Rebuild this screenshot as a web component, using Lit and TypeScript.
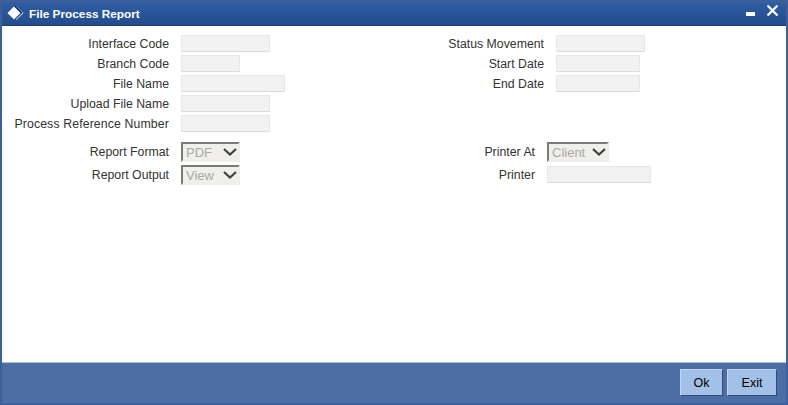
import { LitElement, html, css } from "lit";
import { customElement } from "lit/decorators.js";

const inp = (w: number) => html`<span class="input" style="width:${w}px"></span>`;
const sel = (w: number, t: string) => html`<span class="select" style="width:${w}px"><span class="val">${t}</span>
  <svg width="14" height="8" viewBox="0 0 14 8"><path d="M1 1 L7 6.5 L13 1" fill="none" stroke="#404040" stroke-width="2.2"/></svg></span>`;

@customElement("app-root")
export class AppRoot extends LitElement {
  static styles = css`
    :host { display: block; width: 788px; height: 405px; font-family: "Liberation Sans", Arial, sans-serif; overflow: hidden; }
    .win { width: 788px; height: 405px; box-sizing: border-box; background: #3a5f9b; padding: 3px 2px 2px 2px; display: flex; flex-direction: column; }
    .head { height: 23px; flex: none; display: flex; align-items: center; padding: 0 8px 0 4px; box-sizing: border-box;
      background: linear-gradient(#2f5da3 0, #234c8c 100%); border-bottom: 1px solid #1c3d75; }
    .title { color: #fff; font-size: 11.8px; font-weight: bold; margin-left: 4px; }
    .logo { flex: none; margin-top: -2px; }
    .ctrls { margin-left: auto; display: flex; align-items: flex-start; gap: 12px; height: 100%; }
    .min { width: 9px; height: 4px; background: #fff; margin-top: 9px; }
    .x { margin-top: 2px; }
    .body { flex: 1; background: #fff; padding: 9px 0 0 0; display: flex; flex-direction: column; }
    .top { display: flex; height: 100px; }
    .bottom { display: flex; margin-top: 7px; }
    .col { display: flex; flex-direction: column; }
    .row { display: flex; align-items: flex-start; height: 20px; gap: 12px; }
    .bottom .row { height: 23px; }
    .l1 { width: 167px; }
    .l3 { width: 181px; }
    .l4 { width: 172px; }
    .lbl { text-align: right; font-size: 12.3px; line-height: 18px; color: #333; white-space: nowrap; }
    .lbl.wide { letter-spacing: 0.12px; }
    .bottom .lbl { line-height: 20px; }
    .c1 { width: 361px; }
    .input { display: block; height: 17px; box-sizing: border-box; background: #f2f2f2; border: 1px solid #e8e8e4; border-bottom-color: #dcdcd8; flex: none; }
    .bottom .input { margin-top: 1px; }
    .select { display: flex; align-items: center; justify-content: space-between; height: 20px; box-sizing: border-box; background: #f0efeb;
      border: 2px solid; border-color: #7b7b76 #eeeeea #eeeeea #7b7b76; padding: 0 1px 0 3px; flex: none; color: #a8a8a8; font-size: 13px; }
    .foot { height: 41px; flex: none; background: #4d6ea5; border-top: 1px solid #a9bfe0; box-sizing: border-box; display: flex; justify-content: flex-end; align-items: flex-start; padding: 6px 9px 0 0; gap: 4px; }
    .btn { width: 43px; height: 27px; box-sizing: border-box; background: #a3c0e6; border: 1px solid; border-color: #c4d7f0 #2d4a7a #2d4a7a #c4d7f0; color: #000; font: 12.5px "Liberation Sans", Arial, sans-serif; padding: 0; display: flex; align-items: center; justify-content: center; }
    .btn.exit { width: 50px; }
  `;
  render() {
    return html`<div class="win">
      <div class="head">
        <svg class="logo" width="19" height="17" viewBox="0 0 19 17"><path d="M10.5 1 L17.5 8 L10.5 15 L3.5 8 Z" fill="#bccde6"/><path d="M9.5 0.5 L16.5 7.5 L9.5 14.5 L2.5 7.5 Z" fill="#12305f"/><path d="M8 1.5 L14.5 8 L8 14.5 L1.5 8 Z" fill="#fff"/></svg>
        <span class="title">File Process Report</span>
        <div class="ctrls">
          <span class="min"></span>
          <svg class="x" width="11" height="11" viewBox="0 0 11 11"><path d="M0.5 0.5 L10.5 10.5 M10.5 0.5 L0.5 10.5" stroke="#fff" stroke-width="2.2"/></svg>
        </div>
      </div>
      <div class="body">
        <div class="top">
          <div class="col c1">
            <div class="row"><span class="lbl l1">Interface Code</span>${inp(89)}</div>
            <div class="row"><span class="lbl l1">Branch Code</span>${inp(59)}</div>
            <div class="row"><span class="lbl l1">File Name</span>${inp(104)}</div>
            <div class="row"><span class="lbl l1">Upload File Name</span>${inp(89)}</div>
            <div class="row"><span class="lbl l1 wide">Process Reference Number</span>${inp(89)}</div>
          </div>
          <div class="col">
            <div class="row"><span class="lbl l3">Status Movement</span>${inp(89)}</div>
            <div class="row"><span class="lbl l3">Start Date</span>${inp(84)}</div>
            <div class="row"><span class="lbl l3">End Date</span>${inp(84)}</div>
          </div>
        </div>
        <div class="bottom">
          <div class="col c1">
            <div class="row"><span class="lbl l1">Report Format</span>${sel(59, "PDF")}</div>
            <div class="row"><span class="lbl l1">Report Output</span>${sel(59, "View")}</div>
          </div>
          <div class="col">
            <div class="row"><span class="lbl l4">Printer At</span>${sel(62, "Client")}</div>
            <div class="row"><span class="lbl l4">Printer</span>${inp(104)}</div>
          </div>
        </div>
      </div>
      <div class="foot">
        <button class="btn">Ok</button>
        <button class="btn exit">Exit</button>
      </div>
    </div>`;
  }
}
